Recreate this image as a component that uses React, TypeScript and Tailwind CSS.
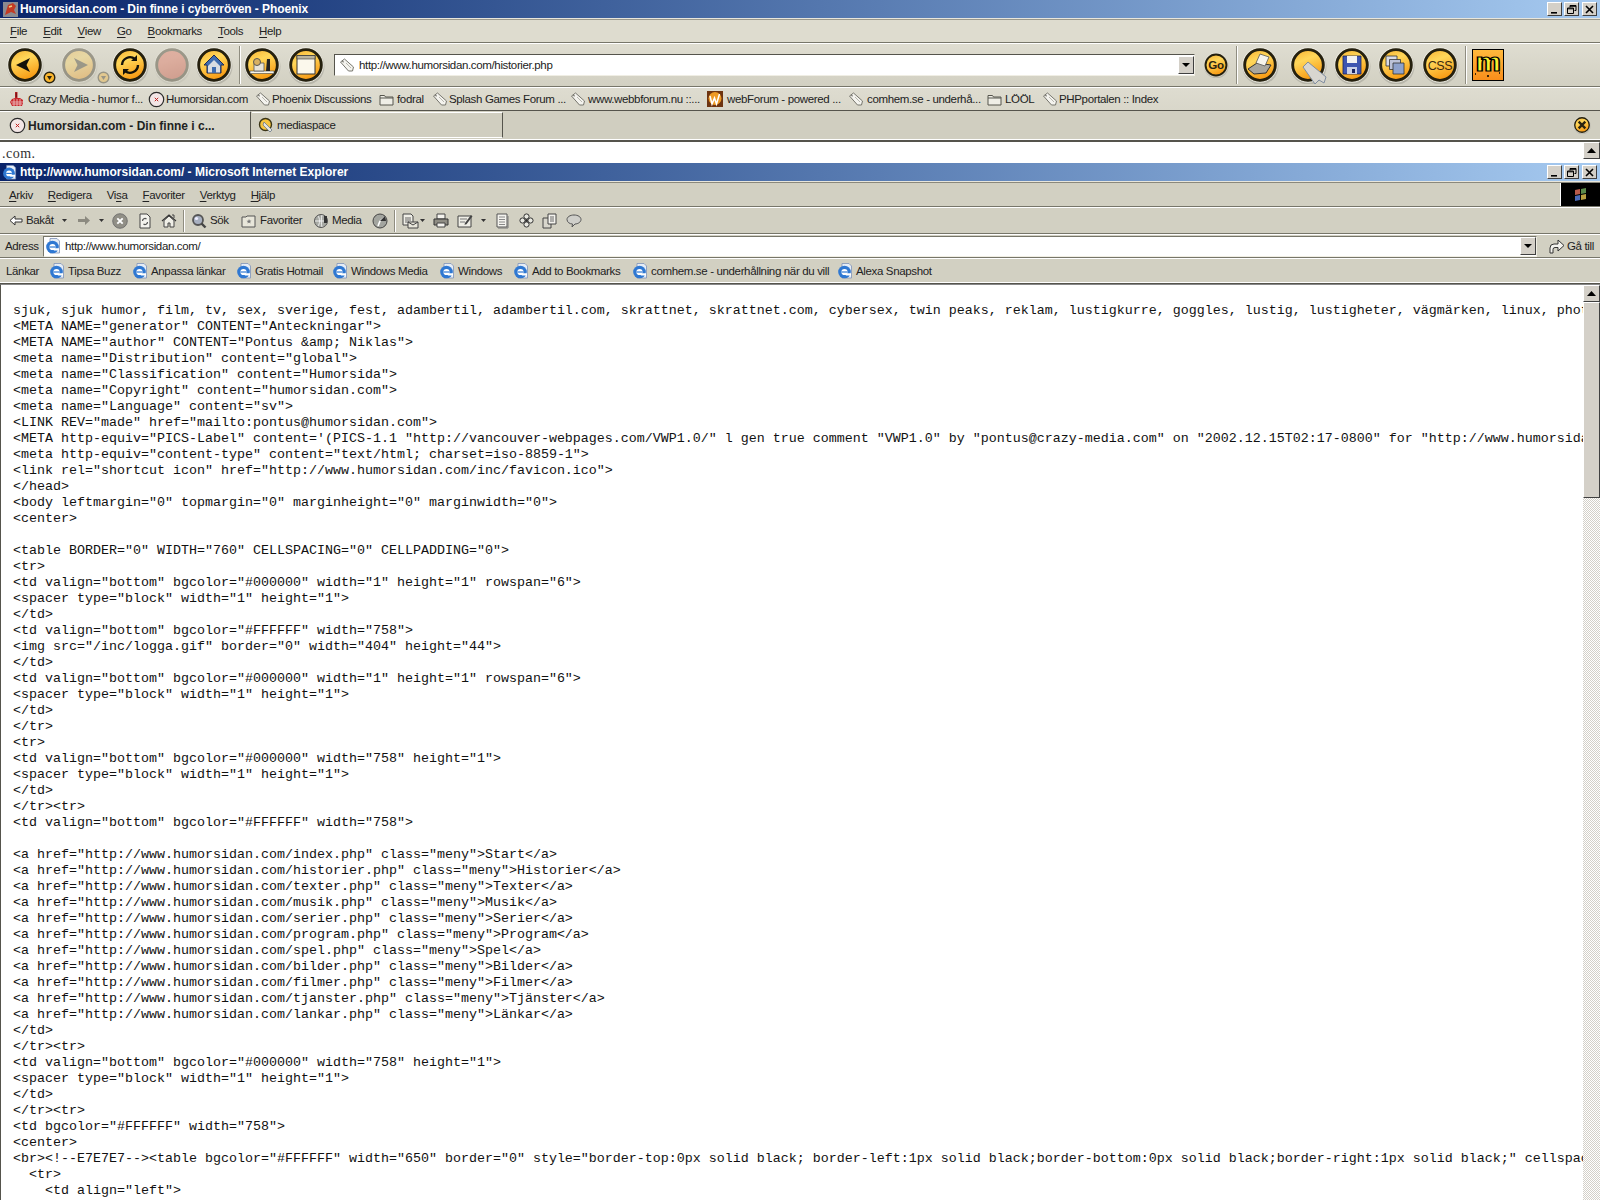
import { useId, type ReactNode } from "react";

const source = [
  `sjuk, sjuk humor, film, tv, sex, sverige, fest, adambertil, adambertil.com, skrattnet, skrattnet.com, cybersex, twin peaks, reklam, lustigkurre, goggles, lustig, lustigheter, vägmärken, linux, photoshop`,
  `<META NAME="generator" CONTENT="Anteckningar">`,
  `<META NAME="author" CONTENT="Pontus &amp; Niklas">`,
  `<meta name="Distribution" content="global">`,
  `<meta name="Classification" content="Humorsida">`,
  `<meta name="Copyright" content="humorsidan.com">`,
  `<meta name="Language" content="sv">`,
  `<LINK REV="made" href="mailto:pontus@humorsidan.com">`,
  `<META http-equiv="PICS-Label" content='(PICS-1.1 "http://vancouver-webpages.com/VWP1.0/" l gen true comment "VWP1.0" by "pontus@crazy-media.com" on "2002.12.15T02:17-0800" for "http://www.humorsidan.com/"`,
  `<meta http-equiv="content-type" content="text/html; charset=iso-8859-1">`,
  `<link rel="shortcut icon" href="http://www.humorsidan.com/inc/favicon.ico">`,
  `</head>`,
  `<body leftmargin="0" topmargin="0" marginheight="0" marginwidth="0">`,
  `<center>`,
  ``,
  `<table BORDER="0" WIDTH="760" CELLSPACING="0" CELLPADDING="0">`,
  `<tr>`,
  `<td valign="bottom" bgcolor="#000000" width="1" height="1" rowspan="6">`,
  `<spacer type="block" width="1" height="1">`,
  `</td>`,
  `<td valign="bottom" bgcolor="#FFFFFF" width="758">`,
  `<img src="/inc/logga.gif" border="0" width="404" height="44">`,
  `</td>`,
  `<td valign="bottom" bgcolor="#000000" width="1" height="1" rowspan="6">`,
  `<spacer type="block" width="1" height="1">`,
  `</td>`,
  `</tr>`,
  `<tr>`,
  `<td valign="bottom" bgcolor="#000000" width="758" height="1">`,
  `<spacer type="block" width="1" height="1">`,
  `</td>`,
  `</tr><tr>`,
  `<td valign="bottom" bgcolor="#FFFFFF" width="758">`,
  ``,
  `<a href="http://www.humorsidan.com/index.php" class="meny">Start</a>`,
  `<a href="http://www.humorsidan.com/historier.php" class="meny">Historier</a>`,
  `<a href="http://www.humorsidan.com/texter.php" class="meny">Texter</a>`,
  `<a href="http://www.humorsidan.com/musik.php" class="meny">Musik</a>`,
  `<a href="http://www.humorsidan.com/serier.php" class="meny">Serier</a>`,
  `<a href="http://www.humorsidan.com/program.php" class="meny">Program</a>`,
  `<a href="http://www.humorsidan.com/spel.php" class="meny">Spel</a>`,
  `<a href="http://www.humorsidan.com/bilder.php" class="meny">Bilder</a>`,
  `<a href="http://www.humorsidan.com/filmer.php" class="meny">Filmer</a>`,
  `<a href="http://www.humorsidan.com/tjanster.php" class="meny">Tjänster</a>`,
  `<a href="http://www.humorsidan.com/lankar.php" class="meny">Länkar</a>`,
  `</td>`,
  `</tr><tr>`,
  `<td valign="bottom" bgcolor="#000000" width="758" height="1">`,
  `<spacer type="block" width="1" height="1">`,
  `</td>`,
  `</tr><tr>`,
  `<td bgcolor="#FFFFFF" width="758">`,
  `<center>`,
  `<br><!--E7E7E7--><table bgcolor="#FFFFFF" width="650" border="0" style="border-top:0px solid black; border-left:1px solid black;border-bottom:0px solid black;border-right:1px solid black;" cellspacing="0"`,
  `  <tr>`,
  `    <td align="left">`,
];

function Orb({ size = 38, faded, red, children }: { size?: number; faded?: boolean; red?: boolean; children?: ReactNode }) {
  const id = useId();
  return (
    <svg width={size} height={size} viewBox="0 0 38 38" className={`shrink-0 ${faded ? "opacity-35" : ""}`}>
      <defs>
        <linearGradient id={id} x1="0.2" y1="0" x2="0.6" y2="1">
          <stop offset="0" stopColor={red ? "#e2604c" : "#f8b636"} />
          <stop offset="0.35" stopColor={red ? "#e2604c" : "#ffd75a"} />
          <stop offset="1" stopColor={red ? "#c9402e" : "#f7960e"} />
        </linearGradient>
      </defs>
      <circle cx="19.500" cy="20.500" r="18" fill="#000" opacity="0.13" />
      <circle cx="19" cy="19" r="17.300" fill="none" stroke="#f2f1e8" strokeWidth="1" opacity="0.7" />
      <circle cx="19" cy="19" r="15.300" fill={`url(#${id})`} stroke="#25200e" strokeWidth="2.8" />
      {children}
    </svg>
  );
}

function SmallDrop({ faded }: { faded?: boolean }) {
  return (
    <svg width="13" height="13" viewBox="0 0 13 13" className={faded ? "opacity-35" : ""}>
      <circle cx="6.500" cy="6.500" r="5.300" fill="#fbb62e" stroke="#2b2410" strokeWidth="1.400" />
      <path d="M4 5h5l-2.500 4z" fill="#2b2410" />
    </svg>
  );
}

function Tag() {
  return (
    <svg width="16" height="16" viewBox="0 0 16 16" className="shrink-0">
      <path d="M1.500 5l4-3 9 8-1 4-4 0z" fill="#f4f3ee" stroke="#77766e" strokeWidth="1" />
      <path d="M3 4.500l2 .5" stroke="#77766e" strokeWidth="1" />
      <path d="M7 6l5 5" stroke="#b9b8b0" strokeWidth="1" />
    </svg>
  );
}

function HumorIcon() {
  return (
    <svg width="17" height="17" viewBox="0 0 17 17" className="shrink-0">
      <circle cx="8.500" cy="8.500" r="7.200" fill="#f3e6e6" stroke="#2a2a2a" strokeWidth="1.200" />
      <path d="M6.800 6.800l3.400 3.400M10.200 6.800l-3.400 3.400" stroke="#c02020" strokeWidth="1" />
    </svg>
  );
}

function CrazyIcon() {
  return (
    <svg width="16" height="17" viewBox="0 0 16 17" className="shrink-0">
      <path d="M6 1h2.500v6H11l3 2v3l-1 3H3L1 11l2-3 3-1z" fill="#c8262a" />
      <path d="M2 11h12M3 13h10M5 8v7M8 8v7M11 8v7" stroke="#f0c8c8" strokeWidth="0.800" />
      <path d="M6.500 1.500h1.500v5h-1.500z" fill="#7a1416" />
    </svg>
  );
}

function FolderIcon() {
  return (
    <svg width="15" height="13" viewBox="0 0 15 13" className="shrink-0">
      <path d="M1 2.500h4.500l1 1.500H14v8H1z" fill="#efeee6" stroke="#55544c" strokeWidth="1" />
      <path d="M1 5h13" stroke="#55544c" strokeWidth="1" />
    </svg>
  );
}

function WebForumIcon() {
  return (
    <svg width="16" height="16" viewBox="0 0 16 16" className="shrink-0">
      <rect width="16" height="16" fill="#6e3410" />
      <circle cx="8" cy="7.500" r="6.500" fill="#ee9a24" />
      <path d="M3 5l2 8 2.500-6 2 6 3-10" fill="none" stroke="#fff" strokeWidth="1.500" />
    </svg>
  );
}

function TabSearchIcon() {
  return (
    <svg width="16" height="16" viewBox="0 0 16 16" className="shrink-0">
      <circle cx="7.500" cy="7.500" r="6" fill="#f7c43e" stroke="#3a3416" strokeWidth="1.400" />
      <path d="M6 5l8 8-2 2-1-1-6-6z" fill="#e6e4dc" stroke="#6a7a8a" strokeWidth="0.800" />
    </svg>
  );
}

function IeIcon({ size = 16 }: { size?: number }) {
  return (
    <svg width={size} height={size} viewBox="0 0 16 16" className="shrink-0">
      <path d="M5 .5h7l2.500 2.500v12H5z" fill="#e6edf6" stroke="#7d92b8" strokeWidth="0.800" />
      <circle cx="7.500" cy="9" r="6.300" fill="#2f78d2" />
      <circle cx="7.500" cy="9" r="3.100" fill="#fff" />
      <path d="M4.500 8.400h6v1.200h-6z" fill="#2f78d2" />
      <path d="M7.500 10.300H14v2.100H9z" fill="#fff" />
    </svg>
  );
}

function WinButtons({ className }: { className?: string }) {
  const b =
    "w-[15px] h-[14px] bg-[#d4d0c8] border-t border-l border-t-white border-l-white border-r border-b border-r-[#404040] border-b-[#404040] flex items-center justify-center";
  return (
    <div className={`flex items-center ${className ?? ""}`}>
      <div className={b}>
        <svg width="9" height="9" viewBox="0 0 9 9">
          <path d="M1 7h6v1.600H1z" fill="#000" />
        </svg>
      </div>
      <div className={`${b} ml-[2px]`}>
        <svg width="10" height="9" viewBox="0 0 10 9">
          <path d="M3 .5h6v5H7.500M3 .5v2M3 1.300h6" fill="none" stroke="#000" />
          <path d="M.5 3h6v5.500h-6zM.5 3.800h6" fill="none" stroke="#000" />
        </svg>
      </div>
      <div className={`${b} ml-[3px]`}>
        <svg width="9" height="9" viewBox="0 0 9 9">
          <path d="M1 1l7 7M8 1L1 8" stroke="#000" strokeWidth="1.600" />
        </svg>
      </div>
    </div>
  );
}

function ScrollUp() {
  return (
    <div className="w-[17px] h-[17px] shrink-0 bg-[#d4d0c8] border border-t-white border-l-white border-r-[#404040] border-b-[#404040] flex items-center justify-center">
      <svg width="9" height="5" viewBox="0 0 9 5">
        <path d="M4.500 0L9 5H0z" fill="#000" />
      </svg>
    </div>
  );
}

function ComboArrow({ className }: { className?: string }) {
  return (
    <div
      className={`w-[16px] h-[18px] shrink-0 bg-[#d4d0c8] border border-t-white border-l-white border-r-[#404040] border-b-[#404040] flex items-center justify-center ${className ?? ""}`}
    >
      <svg width="8" height="4" viewBox="0 0 8 4">
        <path d="M0 0h8L4 4z" fill="#000" />
      </svg>
    </div>
  );
}

function Sep({ className }: { className?: string }) {
  return <div className={`w-[2px] shrink-0 border-l border-l-[#8f8d80] border-r border-r-white ${className ?? ""}`} />;
}

function Rule() {
  return <div className="h-[2px] shrink-0 border-t border-t-[#77766a] border-b border-b-white" />;
}

function Caret({ className }: { className?: string }) {
  return (
    <svg width="5" height="3" viewBox="0 0 5 3" className={`shrink-0 ${className ?? ""}`}>
      <path d="M0 0h5L2.500 3z" fill="#333" />
    </svg>
  );
}

function Bm({ icon, label, className }: { icon: ReactNode; label: string; className: string }) {
  return (
    <div className={`flex items-center shrink-0 ${className}`}>
      {icon}
      <span className="ml-[3px] pt-[2px] whitespace-nowrap">{label}</span>
    </div>
  );
}

function U({ children }: { children: ReactNode }) {
  return <span className="underline underline-offset-2">{children}</span>;
}

export default function App() {
  return (
    <div className="w-[1600px] h-[1200px] overflow-hidden flex flex-col bg-[#d8d6c9] text-[11.5px] tracking-[-0.35px] text-[#222] font-['Liberation_Sans',sans-serif]">
      {/* Phoenix window */}
      <div className="h-[18px] shrink-0 flex items-center bg-gradient-to-r from-[#0a246a] to-[#a6caf0] pl-[3px] pr-[3px]">
        <svg width="15" height="15" viewBox="0 0 15 15" className="shrink-0">
          <rect width="15" height="15" fill="#8a8a90" />
          <path d="M2 13L5 3l5-2 3 3-2 4 2 4-5-2z" fill="#c23a24" />
          <path d="M6 5l3-1" stroke="#f0d080" strokeWidth="1.400" />
        </svg>
        <span className="ml-[2px] text-white font-bold text-[12px] tracking-[-0.08px] whitespace-nowrap">
          Humorsidan.com - Din finne i cyberröven - Phoenix
        </span>
        <WinButtons className="ml-auto" />
      </div>
      <div className="h-[1px] shrink-0 bg-[#e8e6dc]" />
      <div className="h-[1px] shrink-0 bg-[#9a988c]" />
      <div className="h-[22px] shrink-0 flex items-center bg-[#dedccf] pl-[10px] pt-[2px] gap-[16px]">
        <span><U>F</U>ile</span>
        <span><U>E</U>dit</span>
        <span><U>V</U>iew</span>
        <span><U>G</U>o</span>
        <span><U>B</U>ookmarks</span>
        <span><U>T</U>ools</span>
        <span><U>H</U>elp</span>
      </div>
      <Rule />
      <div className="h-[42px] shrink-0 flex items-center pl-[6px] bg-gradient-to-b from-[#dfddd1] to-[#d2d0c2]">
        <div className="relative shrink-0">
          <Orb>
            <path d="M10 19l14-7-3.500 7 3.500 7z" fill="#14120a" />
          </Orb>
          <div className="absolute left-[37px] top-[25px]">
            <SmallDrop />
          </div>
        </div>
        <div className="relative shrink-0 ml-[16px]">
          <Orb faded>
            <path d="M28 19l-14-7 3.500 7-3.500 7z" fill="#2b2410" />
          </Orb>
          <div className="absolute left-[37px] top-[25px]">
            <SmallDrop faded />
          </div>
        </div>
        <div className="ml-[13px] shrink-0">
          <Orb>
            <path d="M11 19a8 8 0 0 1 13-6M27 19a8 8 0 0 1-13 6" fill="none" stroke="#14120a" strokeWidth="2.400" />
            <path d="M26 9v6h-6zM12 29v-6h6z" fill="#14120a" />
          </Orb>
        </div>
        <div className="ml-[4px] shrink-0">
          <Orb faded red />
        </div>
        <div className="ml-[4px] shrink-0">
          <Orb>
            <path d="M19 9l10 10h-3v8H12v-8H9z" fill="#3f6db0" stroke="#1f2a55" strokeWidth="1" />
            <path d="M13 20l6-6 6 6v6.500H13z" fill="#d9dde2" />
            <path d="M17 21h4v6h-4z" fill="#3f6db0" />
          </Orb>
        </div>
        <Sep className="h-[38px] ml-[6px]" />
        <div className="ml-[2px] shrink-0">
          <Orb>
            <path d="M7 25h24v2.500H7z" fill="#f6f4ec" stroke="#444" strokeWidth="0.600" />
            <path d="M11 17h10v8H11z" fill="#e8e4d8" stroke="#555" strokeWidth="0.800" />
            <circle cx="14" cy="16" r="3.500" fill="#d8b060" stroke="#555" strokeWidth="1" />
            <path d="M24 13h3v12h-4z" fill="#222" />
          </Orb>
        </div>
        <div className="ml-[6px] shrink-0">
          <Orb>
            <rect x="10" y="9.500" width="18" height="18.500" fill="#fbf8ec" stroke="#333" strokeWidth="1" />
            <path d="M10 9.500h18V13H10z" fill="#b9b4a0" stroke="#333" strokeWidth="0.600" />
          </Orb>
        </div>
        <div className="ml-[9px] h-[22px] w-[861px] shrink-0 flex items-center bg-white border-t border-l border-t-[#55544c] border-l-[#55544c] border-r border-b border-r-[#f0eee4] border-b-[#f0eee4]">
          <div className="ml-[4px]">
            <Tag />
          </div>
          <span className="ml-[4px] pt-[2px] whitespace-nowrap">http://www.humorsidan.com/historier.php</span>
          <ComboArrow className="ml-auto" />
        </div>
        <div className="ml-[8px] shrink-0">
          <Orb size={26}>
            <text x="19" y="24.500" textAnchor="middle" fontSize="17" fontWeight="700" fill="#2b2410" fontFamily="Liberation Sans, sans-serif">
              Go
            </text>
          </Orb>
        </div>
        <Sep className="h-[38px] ml-[7px]" />
        <div className="ml-[3px] shrink-0">
          <Orb>
            <path d="M7 23l9-6 14 2-5 8-12 1z" fill="#a9a79f" stroke="#333" strokeWidth="1" />
            <path d="M15 17l4-9 9 3-4 9z" fill="#f6f4ec" stroke="#555" strokeWidth="0.800" />
          </Orb>
        </div>
        <div className="ml-[10px] shrink-0">
          <Orb>
            <path d="M14 21l5-5 18 15-2 6-5-3-4 4z" fill="#d8d6d0" stroke="#7f8da0" strokeWidth="1" />
          </Orb>
        </div>
        <div className="ml-[6px] shrink-0">
          <Orb>
            <path d="M10 10h18v18H10z" fill="#3e55b0" stroke="#1a2560" strokeWidth="0.800" />
            <path d="M14 10h10v7H14z" fill="#f2f2f2" />
            <path d="M14 21h10v7H14z" fill="#c9d0e8" />
            <path d="M19 23h3v4h-3z" fill="#1a2560" />
          </Orb>
        </div>
        <div className="ml-[6px] shrink-0">
          <Orb>
            <path d="M9 10h11v10H9z" fill="#d8dbe6" stroke="#333" strokeWidth="0.800" />
            <path d="M12.500 13.500h11v10h-11z" fill="#bcc3d8" stroke="#333" strokeWidth="0.800" />
            <path d="M16 17h11v11H16z" fill="#8ea2cc" stroke="#333" strokeWidth="0.800" />
          </Orb>
        </div>
        <div className="ml-[6px] shrink-0">
          <Orb>
            <text x="19" y="23.500" textAnchor="middle" fontSize="12.500" fill="#3a2a10" fontFamily="Liberation Sans, sans-serif">
              CSS
            </text>
          </Orb>
        </div>
        <Sep className="h-[38px] ml-[6px]" />
        <div className="ml-[5px] w-[32px] h-[32px] shrink-0 border border-black bg-gradient-to-b from-[#ffb93c] to-[#f98e1a]">
          <svg width="30" height="30" viewBox="0 0 30 30">
            <text
              x="15"
              y="21"
              textAnchor="middle"
              textLength="24"
              lengthAdjust="spacingAndGlyphs"
              fontSize="26"
              fontWeight="700"
              fill="#f6f030"
              stroke="#000"
              strokeWidth="1"
              fontFamily="Liberation Mono, monospace"
            >
              m
            </text>
            <path d="M2 24h1M14 26h2M26 23h1" stroke="#000" strokeWidth="1.500" />
          </svg>
        </div>
      </div>
      <Rule />
      <div className="h-[22px] shrink-0 flex items-center pl-[9px] bg-gradient-to-b from-[#dedcd0] to-[#d9d7ca]">
        <Bm className="w-[139px]" icon={<CrazyIcon />} label="Crazy Media - humor f..." />
        <Bm className="w-[107px] [&>span]:ml-[1px]" icon={<HumorIcon />} label="Humorsidan.com" />
        <Bm className="w-[124px] [&>span]:ml-[1px]" icon={<Tag />} label="Phoenix Discussions" />
        <Bm className="w-[53px]" icon={<FolderIcon />} label="fodral" />
        <Bm className="w-[138px] [&>span]:ml-[1px]" icon={<Tag />} label="Splash Games Forum ..." />
        <Bm className="w-[137px] [&>span]:ml-[2px]" icon={<Tag />} label="www.webbforum.nu ::..." />
        <Bm className="w-[141px] [&>span]:ml-[4px]" icon={<WebForumIcon />} label="webForum - powered ..." />
        <Bm className="w-[139px]" icon={<Tag />} label="comhem.se - underhå..." />
        <Bm className="w-[55px]" icon={<FolderIcon />} label="LÖÖL" />
        <Bm className="w-[120px] [&>span]:ml-[1px]" icon={<Tag />} label="PHPportalen :: Index" />
      </div>
      <div className="h-[1px] shrink-0 bg-[#55544c]" />
      {/* tab strip */}
      <div className="h-[29px] shrink-0 flex items-end bg-[#d0cec0] border-b border-b-white">
        <div className="w-[251px] h-[28px] shrink-0 flex items-center pl-[9px] bg-[#d8d6ca] border-r border-r-[#55544c] border-t border-t-white">
          <HumorIcon />
          <span className="ml-[2px] font-bold text-[12px] tracking-normal whitespace-nowrap">Humorsidan.com - Din finne i c...</span>
        </div>
        <div className="w-[251px] h-[26px] shrink-0 ml-[1px] mb-[1px] flex items-center pl-[6px] border-r border-r-[#55544c] border-t border-t-white border-b border-b-white">
          <TabSearchIcon />
          <span className="ml-[3px] pt-[2px] whitespace-nowrap">mediaspace</span>
        </div>
        <div className="ml-auto mr-[9px] mb-[5px]">
          <Orb size={18}>
            <path d="M12 12l14 14M26 12L12 26" stroke="#2b2410" strokeWidth="5" />
          </Orb>
        </div>
      </div>
      <div className="h-[2px] shrink-0 bg-[#55544c]" />
      <div className="h-[21px] shrink-0 flex bg-white">
        <div className="flex-1 pl-[2px] pt-[2px] font-['Liberation_Serif',serif] text-[14px] leading-[20px] tracking-[0.5px] text-[#333]">.com.</div>
        <ScrollUp />
      </div>

      {/* IE window */}
      <div className="h-[18px] shrink-0 flex items-center bg-gradient-to-r from-[#0a246a] to-[#a6caf0] pl-[2px] pr-[3px]">
        <IeIcon size={15} />
        <span className="ml-[3px] text-white font-bold text-[12px] tracking-normal whitespace-nowrap">
          http://www.humorsidan.com/ - Microsoft Internet Explorer
        </span>
        <WinButtons className="ml-auto" />
      </div>
      <div className="h-[2px] shrink-0 border-t border-t-[#e8e6dc] border-b border-b-[#8a887c]" />
      <div className="h-[23px] shrink-0 flex items-center bg-[#d2d0c2] pl-[9px] gap-[15px]">
        <span className="pt-[2px]"><U>A</U>rkiv</span>
        <span className="pt-[2px]"><U>R</U>edigera</span>
        <span className="pt-[2px]">Vi<U>s</U>a</span>
        <span className="pt-[2px]"><U>F</U>avoriter</span>
        <span className="pt-[2px]"><U>V</U>erktyg</span>
        <span className="pt-[2px]"><U>H</U>jälp</span>
        <div className="ml-auto w-[40px] h-[23px] bg-black border-l border-l-white flex items-center justify-center">
          <svg width="18" height="16" viewBox="0 0 18 16">
            <path d="M3 3l5-1v5l-5 1z" fill="#b85a4a" />
            <path d="M9 2l5-1v5l-5 1z" fill="#5a8a4a" />
            <path d="M3 9l5-1v5l-5 1z" fill="#4a6ab8" />
            <path d="M9 8l5-1v5l-5 1z" fill="#b8a040" />
          </svg>
        </div>
      </div>
      <Rule />
      <div className="h-[25px] shrink-0 flex items-center bg-[#d2d0c2] pl-[9px]">
        <svg width="14" height="11" viewBox="0 0 14 11" className="shrink-0">
          <path d="M1 5.500L6 1v3h7v3H6v3z" fill="#fff" stroke="#333" strokeWidth="1" />
        </svg>
        <span className="ml-[3px] w-[27px] shrink-0">Bakåt</span>
        <Caret className="ml-[9px]" />
        <svg width="14" height="11" viewBox="0 0 14 11" className="shrink-0 ml-[10px]">
          <path d="M13 5.500L8 1v3H1v3h7v3z" fill="#8c8a80" />
        </svg>
        <Caret className="ml-[8px]" />
        <svg width="16" height="16" viewBox="0 0 16 16" className="shrink-0 ml-[8px]">
          <circle cx="8" cy="8" r="7.300" fill="#918f86" stroke="#666" strokeWidth="0.800" />
          <path d="M5.300 5.300l5.400 5.400M10.700 5.300l-5.400 5.400" stroke="#fff" strokeWidth="1.900" />
        </svg>
        <svg width="14" height="16" viewBox="0 0 14 16" className="shrink-0 ml-[10px]">
          <path d="M2 1h7l3 3v11H2z" fill="#f4f3ee" stroke="#444" />
          <path d="M4.500 8a2.500 2.500 0 0 1 4-2M9.500 9a2.500 2.500 0 0 1-4 2" fill="none" stroke="#555" strokeWidth="1.200" />
        </svg>
        <svg width="16" height="15" viewBox="0 0 16 15" className="shrink-0 ml-[9px]">
          <path d="M1 8l7-6 7 6" fill="none" stroke="#333" strokeWidth="1.200" />
          <path d="M3 7.500V14h4v-4h2v4h4V7.500L8 3z" fill="#efeee6" stroke="#444" />
          <path d="M11 2h2v3" fill="none" stroke="#444" />
        </svg>
        <Sep className="h-[22px] ml-[6px]" />
        <svg width="16" height="16" viewBox="0 0 16 16" className="shrink-0 ml-[6px]">
          <circle cx="7" cy="7" r="5" fill="#a8b0c0" stroke="#555" strokeWidth="1.800" />
          <circle cx="5.500" cy="5.500" r="1.600" fill="#eef" />
          <path d="M10.500 10.500l4 4" stroke="#444" strokeWidth="2.400" />
        </svg>
        <span className="ml-[3px] w-[19px] shrink-0">Sök</span>
        <svg width="15" height="14" viewBox="0 0 15 14" className="shrink-0 ml-[12px]">
          <path d="M1 3h4l1-1h8v11H1z" fill="#e8e6da" stroke="#555" />
          <path d="M8 5l.7 1.600 1.800.1-1.400 1.100.5 1.700L8 8.600l-1.600 1 .5-1.700-1.400-1.100 1.800-.1z" fill="#777" />
        </svg>
        <span className="ml-[4px] w-[42px] shrink-0">Favoriter</span>
        <svg width="17" height="16" viewBox="0 0 17 16" className="shrink-0 ml-[11px]">
          <circle cx="8" cy="8" r="6.500" fill="#a8aaa4" stroke="#555" />
          <path d="M5 3c2 2 2 8 0 10M9 2c-1 3-1 9 0 12M2 8h12" stroke="#eee" fill="none" />
          <path d="M11 3h3v7h-3z" fill="#333" />
        </svg>
        <span className="ml-[2px] w-[29px] shrink-0">Media</span>
        <svg width="16" height="16" viewBox="0 0 16 16" className="shrink-0 ml-[11px]">
          <circle cx="8" cy="8" r="7" fill="#a3a59f" stroke="#444" />
          <path d="M8 8l5-4M8 8l-2 5" stroke="#fff" strokeWidth="1.600" fill="none" />
          <path d="M8 8l5-5 1 5z" fill="#333" />
        </svg>
        <Sep className="h-[22px] ml-[6px]" />
        <svg width="17" height="16" viewBox="0 0 17 16" className="shrink-0 ml-[6px]">
          <path d="M1 1h8l2 2v9H1z" fill="#efeee6" stroke="#444" />
          <path d="M3 5h6M3 7h6M3 9h4" stroke="#666" />
          <path d="M6 9h10v6H6z" fill="#e8e6da" stroke="#444" />
          <path d="M6 9l5 3 5-3" fill="none" stroke="#444" />
        </svg>
        <Caret className="ml-[1px]" />
        <svg width="16" height="15" viewBox="0 0 16 15" className="shrink-0 ml-[8px]">
          <path d="M4 1h8v5H4z" fill="#f4f3ee" stroke="#444" />
          <path d="M1 6h14v6H1z" fill="#8f8d84" stroke="#333" />
          <path d="M4 10h8v4H4z" fill="#f4f3ee" stroke="#444" />
        </svg>
        <svg width="17" height="15" viewBox="0 0 17 15" className="shrink-0 ml-[8px]">
          <path d="M1 3h13v11H1z" fill="#efeee6" stroke="#444" />
          <path d="M3 6h7M3 9h5" stroke="#777" />
          <path d="M8 10l6-8 1.500 1.200-6 8-2 .6z" fill="#444" />
        </svg>
        <Caret className="ml-[7px]" />
        <svg width="14" height="16" viewBox="0 0 14 16" className="shrink-0 ml-[9px]">
          <path d="M2 1h10v13H2z" fill="#f4f3ee" stroke="#555" />
          <path d="M3 15h10V3" fill="none" stroke="#777" />
          <path d="M4 4h6M4 6.500h6M4 9h6M4 11.500h6" stroke="#888" />
        </svg>
        <svg width="15" height="15" viewBox="0 0 15 15" className="shrink-0 ml-[10px]">
          <circle cx="7.500" cy="3.500" r="2.600" fill="#e8e8e0" stroke="#333" />
          <circle cx="3.500" cy="7.500" r="2.600" fill="#e8e8e0" stroke="#333" />
          <circle cx="11.500" cy="7.500" r="2.600" fill="#e8e8e0" stroke="#333" />
          <circle cx="7.500" cy="11.500" r="2.600" fill="#e8e8e0" stroke="#333" />
          <circle cx="7.500" cy="7.500" r="1.500" fill="#333" />
        </svg>
        <svg width="16" height="16" viewBox="0 0 16 16" className="shrink-0 ml-[8px]">
          <path d="M1 5h8v10H1z" fill="#d8d6cc" stroke="#444" />
          <path d="M6 1h8v10H6z" fill="#f4f3ee" stroke="#444" />
          <path d="M8 4h4M8 6h4M8 8h4" stroke="#666" />
        </svg>
        <svg width="16" height="14" viewBox="0 0 16 14" className="shrink-0 ml-[8px]">
          <path d="M8 1c4 0 7 2 7 4.500S12 10 9 10l-3 3 .5-3C3.500 10 1 8 1 5.500S4 1 8 1z" fill="#cfcfca" stroke="#555" />
        </svg>
      </div>
      <Rule />
      <div className="h-[22px] shrink-0 flex items-center bg-[#d2d0c2] pl-[5px] pr-[8px]">
        <span className="w-[38px] shrink-0 pt-[2px]">Adress</span>
        <div className="h-[21px] w-[1494px] shrink-0 flex items-center bg-white border-t border-l border-t-[#77766a] border-l-[#77766a] border-b border-r border-b-[#f0eee4] border-r-[#f0eee4]">
          <div className="ml-[1px]">
            <IeIcon />
          </div>
          <span className="ml-[4px] pt-[2px] whitespace-nowrap">http://www.humorsidan.com/</span>
          <ComboArrow className="ml-auto" />
        </div>
        <svg width="17" height="16" viewBox="0 0 17 16" className="shrink-0 ml-[11px]">
          <path d="M2 15V10a4 4 0 0 1 4-4h4V2l6 5.500-6 5.500V9.500H7a2 2 0 0 0-2 2V15z" fill="#f4f3ee" stroke="#333" />
        </svg>
        <span className="ml-[2px] pt-[2px] whitespace-nowrap">Gå till</span>
      </div>
      <Rule />
      <div className="h-[23px] shrink-0 flex items-center bg-[#d2d0c2] pl-[6px]">
        <span className="w-[43px] shrink-0 pt-[2px]">Länkar</span>
        <Bm className="w-[83px]" icon={<IeIcon />} label="Tipsa Buzz" />
        <Bm className="w-[104px]" icon={<IeIcon />} label="Anpassa länkar" />
        <Bm className="w-[96px]" icon={<IeIcon />} label="Gratis Hotmail" />
        <Bm className="w-[107px]" icon={<IeIcon />} label="Windows Media" />
        <Bm className="w-[74px]" icon={<IeIcon />} label="Windows" />
        <Bm className="w-[119px]" icon={<IeIcon />} label="Add to Bookmarks" />
        <Bm className="w-[205px]" icon={<IeIcon />} label="comhem.se - underhållning när du vill" />
        <Bm className="w-[100px]" icon={<IeIcon />} label="Alexa Snapshot" />
      </div>
      <div className="h-[2px] shrink-0 border-t border-t-white border-b border-b-[#55544c]" />

      {/* document */}
      <div className="flex-1 min-h-0 flex bg-white border-l border-l-[#55544c] border-t border-t-[#888]">
        <div className="flex-1 min-w-0 overflow-hidden pt-[18px] pl-[12px] font-['Liberation_Mono',monospace] text-[13.33px] leading-[16px] tracking-normal text-[#111] whitespace-pre">
          {source.map((line, i) => (
            <div key={i} className="h-[16px]">
              {line}
            </div>
          ))}
        </div>
        <div className="w-[17px] shrink-0 flex flex-col bg-[repeating-conic-gradient(#ffffff_0_25%,#d4d0c8_0_50%)] bg-[length:2px_2px]">
          <ScrollUp />
          <div className="h-[196px] shrink-0 bg-[#d4d0c8] border border-t-white border-l-white border-r-[#404040] border-b-[#404040]" />
        </div>
      </div>
    </div>
  );
}
